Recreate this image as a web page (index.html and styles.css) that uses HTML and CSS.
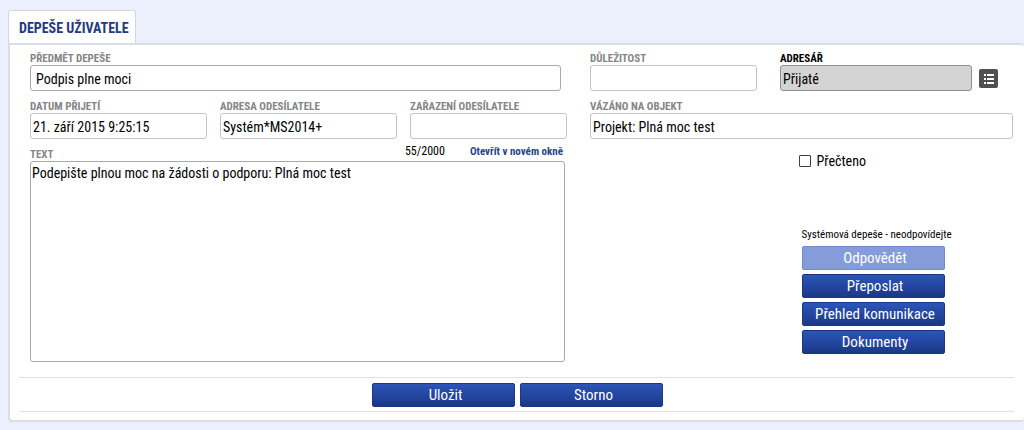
FILE: index.html
```html
<!DOCTYPE html>
<html lang="cs">
<head>
<meta charset="utf-8">
<meta name="viewport" content="width=device-width, initial-scale=1">
<title>Depeše uživatele</title>
<link rel="stylesheet" href="styles.css">
</head>
<body>
<main class="page">
  <h1 class="tab">DEPEŠE UŽIVATELE</h1>
  <form class="panel">
    <div class="columns">
      <section class="main">
        <div class="upper">
          <div class="field subject">
            <label class="label" for="subject">PŘEDMĚT DEPEŠE</label>
            <input class="input roomy" id="subject" type="text" value="Podpis plne moci">
          </div>
          <div class="triple">
            <div class="field">
              <label class="label" for="date">DATUM PŘIJETÍ</label>
              <input class="input light" id="date" type="text" value="21. září 2015 9:25:15">
            </div>
            <div class="field">
              <label class="label" for="sender">ADRESA ODESÍLATELE</label>
              <input class="input light" id="sender" type="text" value="Systém*MS2014+">
            </div>
            <div class="field">
              <label class="label" for="role">ZAŘAZENÍ ODESÍLATELE</label>
              <input class="input light" id="role" type="text">
            </div>
          </div>
        </div>
        <div class="field message">
          <div class="message-head">
            <label class="label" for="text">TEXT</label>
            <span class="counter">55/2000</span>
            <a class="open-link" href="#">Otevřít v novém okně</a>
          </div>
          <textarea class="textarea" id="text">Podepište plnou moc na žádosti o podporu: Plná moc test</textarea>
        </div>
      </section>
      <section class="side">
        <div class="pair">
          <div class="field">
            <label class="label" for="priority">DŮLEŽITOST</label>
            <input class="input light" id="priority" type="text">
          </div>
          <div class="field">
            <label class="label strong" for="folder">ADRESÁŘ</label>
            <div class="picker">
              <input class="input filled" id="folder" type="text" value="Přijaté" readonly>
              <button class="list-button" type="button" aria-label="Seznam">
                <svg class="icon" viewBox="0 0 19 19" aria-hidden="true">
                  <path fill="#fff" d="M5 5h2v2H5zM8 5h7v2H8zM5 9h2v2H5zM8 9h7v2H8zM5 13h2v2H5zM8 13h7v2H8z"/>
                </svg>
              </button>
            </div>
          </div>
        </div>
        <div class="field">
          <label class="label" for="object">VÁZÁNO NA OBJEKT</label>
          <input class="input light" id="object" type="text" value="Projekt: Plná moc test">
        </div>
        <div class="actions">
          <label class="check"><input class="checkbox" type="checkbox">Přečteno</label>
          <div class="reply">
            <p class="note">Systémová depeše - neodpovídejte</p>
            <div class="stack">
              <button class="button" type="button" disabled>Odpovědět</button>
              <button class="button" type="button">Přeposlat</button>
              <button class="button" type="button">Přehled komunikace</button>
              <button class="button" type="button">Dokumenty</button>
            </div>
          </div>
        </div>
      </section>
    </div>
    <div class="footer">
      <button class="button" type="submit">Uložit</button>
      <button class="button" type="reset">Storno</button>
    </div>
  </form>
</main>
</body>
</html>
```
FILE: styles.css
```css
* { box-sizing: border-box; }

body {
  margin: 0;
  background: #ecf0fd;
  color: #000;
}

body, input, textarea, button {
  font-family: "Roboto Condensed", "Liberation Sans Narrow", Roboto, sans-serif;
  font-size: 14px;
}

.page { padding: 10px 0 8px 8px; }

.tab {
  width: fit-content;
  margin: 0;
  padding: 2px 6px 0 10px;
  border: 1px solid #d5d6dc;
  border-bottom: 0;
  border-radius: 3px 3px 0 0;
  background: #fff;
  color: #223a80;
  font-size: 14px;
  font-weight: 700;
  line-height: 30px;
}

.panel {
  border: 2px solid #dadce6;
  border-right: 0;
  border-radius: 0 4px 4px 4px;
  background: #fff;
  padding: 7px 10px 8px 9px;
}

.columns {
  display: grid;
  grid-template-columns: 537fr 423fr;
  gap: 23px;
  padding: 0 1px 15px 11px;
}

.main {
  display: flex;
  flex-direction: column;
  gap: 6px;
  min-width: 0;
}

.upper, .side {
  display: flex;
  flex-direction: column;
  gap: 9px;
  min-width: 0;
}

.field {
  display: flex;
  flex-direction: column;
  min-width: 0;
}

.subject { padding-right: 6px; }

.triple {
  display: grid;
  grid-template-columns: 177fr 177fr 157fr;
  gap: 13px;
}

.pair {
  display: grid;
  grid-template-columns: 167fr 233fr;
  gap: 23px;
}

.label {
  color: #858585;
  font-size: 11px;
  font-weight: 700;
  line-height: 13px;
}

.strong { color: #000; }

.input {
  width: 100%;
  min-width: 0;
  height: 26px;
  padding: 2px 2px 0;
  border: 1px solid #a9a9a9;
  border-radius: 3px;
  background: #fff;
  color: #000;
}

.roomy { padding-left: 5px; }
.light { border-color: #c4c4c4; }

.filled {
  flex: 1;
  border-color: #8f8f8f;
  background: #d4d4d4;
}

.picker {
  display: flex;
  align-items: center;
  gap: 7px;
  padding-right: 15px;
}

.list-button {
  flex: none;
  width: 19px;
  height: 19px;
  padding: 0;
  border: 0;
  border-radius: 2px;
  background: #505050;
}

.icon { display: block; width: 19px; height: 19px; }

.message { padding-right: 2px; }

.message-head {
  display: flex;
  align-items: flex-end;
  padding-right: 2px;
}

.counter, .open-link {
  padding-bottom: 3px;
  line-height: 13px;
}

.counter {
  margin-left: auto;
  margin-right: 25px;
  font-size: 12px;
}

.open-link {
  color: #27458f;
  font-size: 11px;
  font-weight: 700;
  text-decoration: none;
}

.textarea {
  height: 201px;
  padding: 2px 1px;
  border: 1px solid #a9a9a9;
  border-radius: 3px;
  line-height: 18px;
  resize: none;
}

.actions {
  display: flex;
  flex-direction: column;
  align-items: flex-start;
  gap: 58px;
  padding: 4px 0 0 50%;
}

.check {
  display: flex;
  align-items: center;
  gap: 6px;
  margin-left: -3px;
  line-height: 18px;
}

.checkbox {
  appearance: none;
  width: 12px;
  height: 12px;
  margin: 0;
  border: 1px solid #404040;
  border-radius: 1px;
  background: #fff;
}

.checkbox:checked { background: #27458f; }

.note {
  margin: 0 0 4px;
  font-size: 11px;
  line-height: 14px;
  white-space: nowrap;
}

.stack {
  display: flex;
  flex-direction: column;
  gap: 4px;
}

.button {
  width: 143px;
  height: 24px;
  padding: 0 2px 0 6px;
  border: 1px solid #1b3684;
  border-radius: 2px;
  background: linear-gradient(#2b55b8, #1b3887);
  color: #fff;
  font-size: 15px;
  line-height: 22px;
  white-space: nowrap;
}

.button:disabled {
  border-color: #7389c6;
  background: #859cda;
}

.footer {
  display: flex;
  justify-content: center;
  gap: 5px;
  padding: 5px 0 4px 2px;
  border-top: 1px solid #e0e0e0;
  border-bottom: 1px solid #e0e0e0;
}
```
